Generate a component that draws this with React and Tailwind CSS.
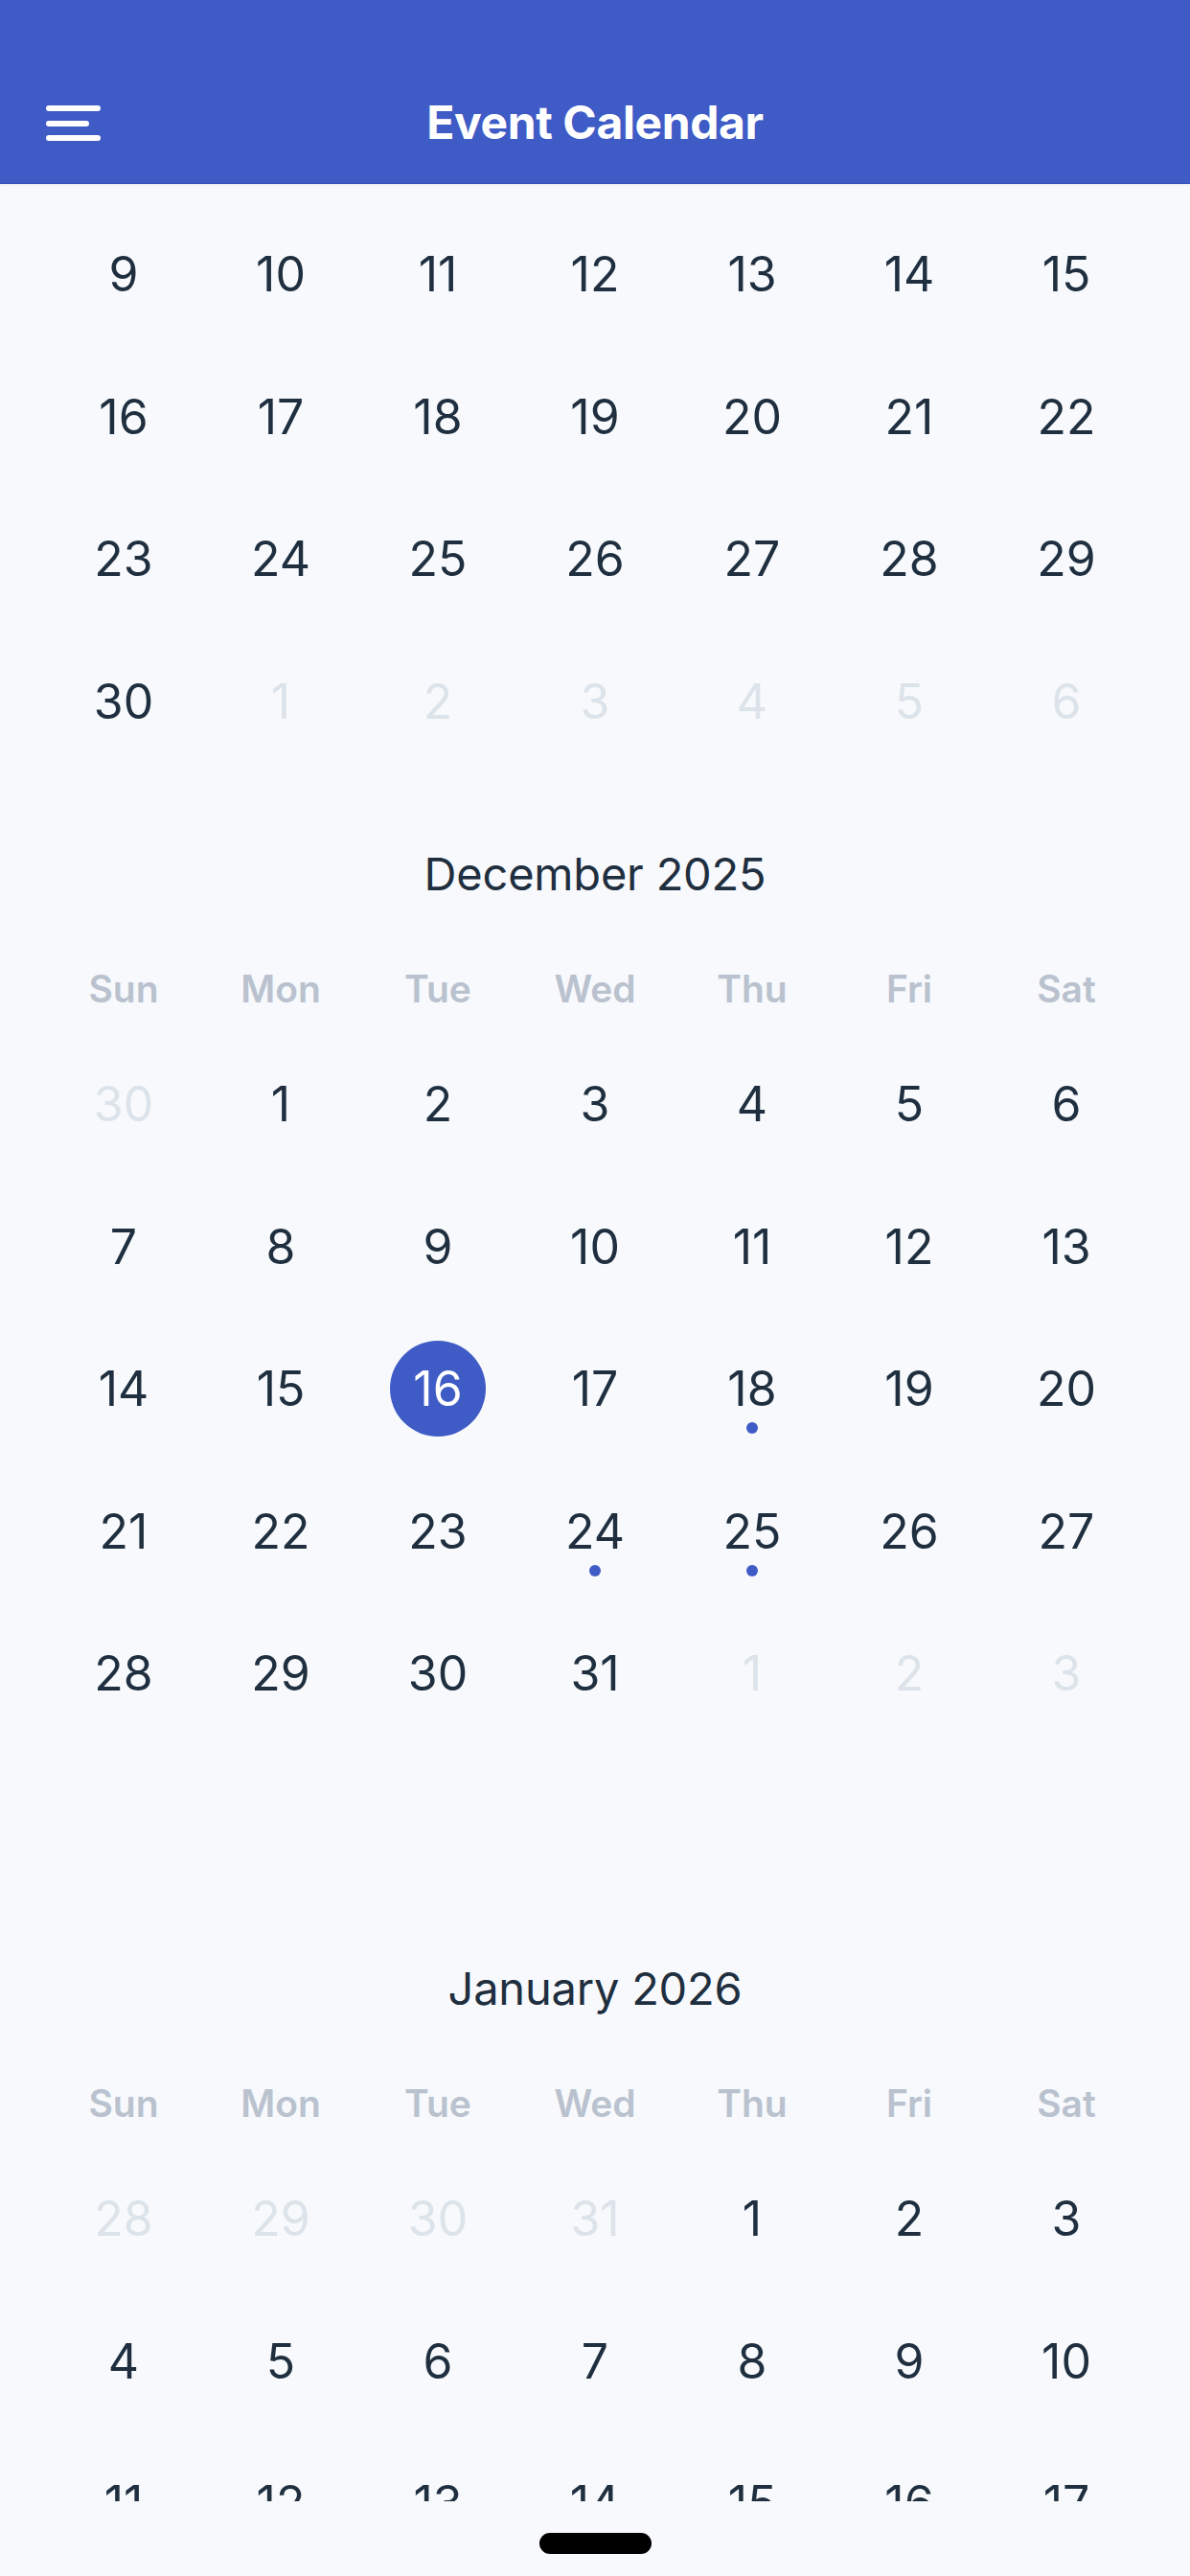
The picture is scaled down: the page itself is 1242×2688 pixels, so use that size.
import { Fragment } from 'react';

const weekdays = ['Sun', 'Mon', 'Tue', 'Wed', 'Thu', 'Fri', 'Sat'];

// 6 weeks max, each day flagged when it belongs to a neighbouring month
const buildWeeks = (year, month) => {
  const first = new Date(year, month, 1);
  const start = new Date(year, month, 1 - first.getDay());
  const weeks = [];
  for (let w = 0; w < 6; w += 1) {
    const week = [];
    for (let d = 0; d < 7; d += 1) {
      const date = new Date(start.getFullYear(), start.getMonth(), start.getDate() + w * 7 + d);
      week.push({ day: date.getDate(), inMonth: date.getMonth() === month });
    }
    if (w > 0 && !week.some((item) => item.inMonth)) break;
    weeks.push(week);
  }
  return weeks;
};

const selected = { year: 2025, month: 11, day: 16 };
const eventDays = { '2025-11': [18, 24, 25] };

const DayCell = ({ item, year, month }) => {
  const isSelected =
    item.inMonth && year === selected.year && month === selected.month && item.day === selected.day;
  const hasEvent = item.inMonth && (eventDays[`${year}-${month}`] || []).includes(item.day);

  return (
    <div className="relative flex h-[148.5px] items-center justify-center">
      {isSelected ? (
        <span className="flex h-[100px] w-[100px] items-center justify-center rounded-full bg-[#3f5bc6] text-[50px] leading-none text-white">
          {item.day}
        </span>
      ) : (
        <span
          className={`text-[50px] leading-none ${item.inMonth ? 'text-[#1f2f3f]' : 'text-[#dde3ea]'}`}
        >
          {item.day}
        </span>
      )}
      {hasEvent && (
        <span className="absolute left-1/2 top-[calc(50%+35px)] h-[12px] w-[12px] -translate-x-1/2 rounded-full bg-[#3f5bc6]" />
      )}
    </div>
  );
};

const WeekGrid = ({ weeks, year, month }) => (
  <div className="grid grid-cols-7">
    {weeks.map((week, w) => (
      <Fragment key={w}>
        {week.map((item, d) => (
          <DayCell item={item} key={`${w}-${d}`} month={month} year={year} />
        ))}
      </Fragment>
    ))}
  </div>
);

const MonthBlock = ({ year, month }) => {
  const title = new Date(year, month, 1).toLocaleString('en-US', { month: 'long', year: 'numeric' });

  return (
    <section className="pt-[76px]">
      <h2 className="h-[60px] text-center text-[47px] font-normal leading-[60px] tracking-[-0.2px] text-[#1f2f3f]">
        {title}
      </h2>
      <div className="mt-[64px] grid h-[50px] grid-cols-7 items-center">
        {weekdays.map((name) => (
          <span className="text-center text-[39px] font-semibold leading-none text-[#b9c2ce]" key={name}>
            {name}
          </span>
        ))}
      </div>
      <div className="mt-[22px] h-[891px]">
        <WeekGrid month={month} weeks={buildWeeks(year, month)} year={year} />
      </div>
    </section>
  );
};

const MenuIcon = () => (
  <svg aria-hidden="true" className="h-[60px] w-[60px]" viewBox="0 0 60 60">
    <g stroke="white" strokeLinecap="round" strokeWidth="6">
      <line x1="3" x2="54" y1="14" y2="14" />
      <line x1="3" x2="42" y1="30" y2="30" />
      <line x1="3" x2="54" y1="45" y2="45" />
    </g>
  </svg>
);

export default function App() {
  const novemberWeeks = buildWeeks(2025, 10).slice(2);

  return (
    <div className="flex h-[2688px] w-full flex-col overflow-hidden bg-[#f7f9fc] font-['Inter','Noto_Sans',sans-serif]">
      <header className="relative z-10 h-[191px] shrink-0 bg-[#3f5bc6] pt-[65px] shadow-[0_1px_0_#3552b5,0_2px_2px_rgba(0,0,0,0.08)]">
        <div className="relative flex h-[126px] items-center justify-center">
          <button aria-label="Open menu" className="absolute left-[48px] top-[34px]" type="button">
            <MenuIcon />
          </button>
          <h1 className="text-[48px] font-bold tracking-[-0.4px] text-white">Event Calendar</h1>
        </div>
      </header>

      <main className="h-[2419px] shrink-0 overflow-hidden px-[47px]">
        <div className="pt-[21px]">
          <WeekGrid month={10} weeks={novemberWeeks} year={2025} />
        </div>
        <MonthBlock month={11} year={2025} />
        <MonthBlock month={0} year={2026} />
      </main>

      <footer className="flex flex-1 justify-center pt-[33px]">
        <span className="h-[22px] w-[117px] rounded-full bg-black" />
      </footer>
    </div>
  );
}
